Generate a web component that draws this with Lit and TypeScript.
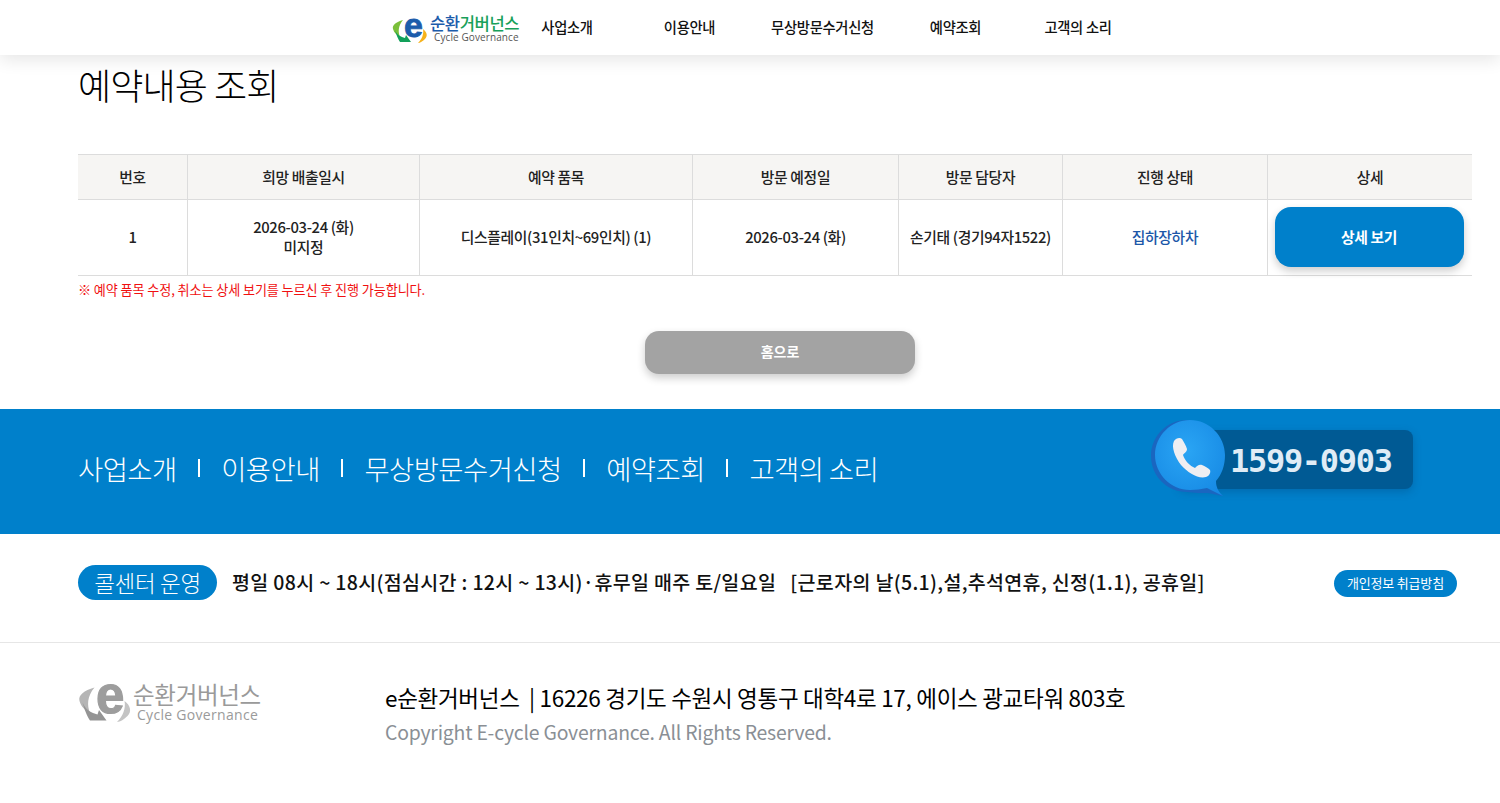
import { LitElement, html, css, svg } from "lit";
import { customElement } from "lit/decorators.js";

const logoMark = (grey: boolean) => {
  const g = grey ? "#b5b5b5" : "#7bbf3a";
  const o = grey ? "#c4c4c4" : "#f6b21b";
  const d = grey ? "#949494" : "#12a05a";
  const e = grey ? "#9d9d9d" : "#1c5cab";
  return svg`
    <path d="M11 3 C4 5 0 8 1 12 C2 16 5 18 8 20 C6 15 6 9 11 3Z" fill=${g}/>
    <path d="M3 13 C5 18 9 20 13 21 L14 18 L19 25 L8 25 C6 22 4 17 3 13Z" fill=${d}/>
    <path d="M31 12 C35 15 36 19 33 22 C31 24 28 26 26 26 C30 22 32 17 31 12Z" fill=${o}/>
    <text x="12" y="20" font-family="Liberation Sans, sans-serif" font-weight="700" font-size="34" stroke=${e} stroke-width=".8" fill=${e}>e</text>`;
};

@customElement("app-root")
export class AppRoot extends LitElement {
  static styles = css`
    :host { display: block; height: 803px; overflow: hidden; background: #fff; font-family: "Noto Sans CJK KR", "Noto Sans", sans-serif; color: #111; }
    * { box-sizing: border-box; }
    svg { overflow: visible; }
    header { position: relative; height: 55px; background: #fff; box-shadow: 0 4px 18px rgba(0,0,0,.11); display: flex; padding-left: 392px; align-items: center; }
    .logo-wrap { display: flex; gap: 2px; width: 129px; flex: none; margin-right: -20.5px; align-items: center; }
    .logo-mark { width: 36px; height: 26px; flex: none; margin-top: 4px; }
    .logo-text { display: flex; flex-direction: column; align-items: flex-start; padding-top: 1px; white-space: nowrap; }
    .logo-ko { font-size: 16.6px; line-height: 18px; font-weight: 500; letter-spacing: -.4px; color: #1c5cab; }
    .logo-ko b { font-weight: 500; color: #17a05a; }
    .logo-en { font-family: "Open Sans", sans-serif; font-size: 10px; line-height: 10px; color: #555; letter-spacing: .1px; margin-left: 4px; }
    nav { display: grid; grid-template-columns: 133px 112px 154px 112px 133px; text-align: center; font-size: 14.3px; line-height: 20px; font-weight: 500; letter-spacing: -.3px; color: #111; margin-top: -2px; }
    main { padding: 0 28px 0 78px; }
    h1 { margin: 0; padding-top: 4px; height: 99px; font-size: 36px; line-height: 50px; font-weight: 300; letter-spacing: -.9px; color: #000; }
    .table { display: grid; grid-template-columns: 109px 232px 273px 206px 164px 205px 205px; border-top: 1px solid #dcdcdc; font-size: 14.8px; font-weight: 500; line-height: 20px; letter-spacing: -.35px; text-align: center; color: #222; }
    .th, .td { display: flex; align-items: center; justify-content: center; flex-direction: column; border-bottom: 1px solid #dcdcdc; border-left: 1px solid #dcdcdc; }
    .first { border-left: 0; }
    .th { height: 45px; background: #f6f5f3; }
    .td { height: 76px; padding-bottom: 2px; }
    .status { color: #1c57a8; }
    .detail { width: 189px; height: 60px; margin-left: -2px; border-radius: 16px; background: #0080cb; color: #fff; font-weight: 700; box-shadow: 0 4px 8px rgba(0,0,0,.2); display: flex; align-items: center; justify-content: center; }
    .note { margin: 5px 0 0; font-size: 13.1px; line-height: 18px; letter-spacing: -.1px; color: #f01010; }
    .home-row { display: flex; justify-content: center; padding: 32px 0 0; height: 110px; margin-left: 10px; }
    .home { width: 270px; height: 43px; padding-bottom: 3px; border-radius: 14px; background: #a3a3a3; color: #fff; font-size: 14px; font-weight: 700; box-shadow: 0 4px 8px rgba(0,0,0,.2); display: flex; align-items: center; justify-content: center; }
    .band { height: 125px; background: #0080cb; display: flex; align-items: flex-start; padding: 0 87px 0 78px; justify-content: space-between; color: #fff; }
    .band-links { display: flex; align-items: center; gap: 21.3px; height: 118px; font-size: 27.4px; font-weight: 300; letter-spacing: -.55px; white-space: nowrap; }
    .sep { width: 2px; height: 18px; background: #fff; }
    .phone { position: relative; width: 235px; height: 59px; margin-top: 21px; padding-top: 3px; background: #005a94; border-radius: 8px; box-shadow: 0 3px 8px rgba(0,60,110,.3); display: flex; align-items: center; padding-left: 52px; }
    .phone span { font-family: "DejaVu Sans Mono", monospace; font-weight: 700; font-size: 32px; letter-spacing: -1.3px; color: #dfecf6; }
    .phone svg { position: absolute; left: -27px; top: -11px; width: 74px; height: 77px; }
    .hours { height: 109px; border-bottom: 1px solid #e6e6e6; display: flex; align-items: center; padding: 0 43px 11px 78px; }
    .pill { width: 139px; height: 35px; padding-bottom: 1px; border-radius: 17.5px; background: #0080cb; color: #fff; font-size: 22.5px; font-weight: 300; letter-spacing: -.3px; display: flex; align-items: center; justify-content: center; flex: none; }
    .hours-text { flex: 1; margin: 0 0 3px 15px; font-size: 19.5px; font-weight: 500; letter-spacing: .33px; white-space: pre; color: #111; }
    .privacy { width: 123px; height: 27px; padding-bottom: 1px; border-radius: 13.5px; background: #0080cb; color: #fff; font-size: 13px; letter-spacing: -.2px; display: flex; align-items: center; justify-content: center; margin-top: 1px; flex: none; }
    .foot { display: flex; padding: 37px 0 0 78px; }
    .foot-logo { width: 307px; display: flex; gap: 1px; flex: none; color: #9a9a9a; }
    .foot-logo svg { width: 54px; height: 39px; flex: none; margin-top: 3px; }
    .foot-logo .ko { font-size: 23.5px; line-height: 28px; font-weight: 400; letter-spacing: -.3px; white-space: nowrap; }
    .foot-logo .en { font-family: "Open Sans", sans-serif; font-size: 14px; line-height: 14px; letter-spacing: .3px; margin-left: 4px; white-space: nowrap; }
    .addr { font-size: 22.5px; line-height: 38px; letter-spacing: -.3px; color: #000; margin-top: -2px; white-space: nowrap; }
    .copy { font-size: 19.4px; line-height: 32px; letter-spacing: -.2px; color: #8a8f95; white-space: nowrap; }
  `;

  render() {
    const heads = ["번호", "희망 배출일시", "예약 품목", "방문 예정일", "방문 담당자", "진행 상태", "상세"];
    return html`
      <header>
        <div class="logo-wrap">
          <svg class="logo-mark" viewBox="0 0 36 26">${logoMark(false)}</svg>
          <div class="logo-text">
            <span class="logo-ko">순환<b>거버넌스</b></span>
            <span class="logo-en">Cycle Governance</span>
          </div>
        </div>
        <nav>
          <span>사업소개</span><span>이용안내</span><span>무상방문수거신청</span><span>예약조회</span><span>고객의 소리</span>
        </nav>
      </header>
      <main>
        <h1>예약내용 조회</h1>
        <div class="table">
          ${heads.map((h, i) => html`<div class="th ${i === 0 ? "first" : ""}">${h}</div>`)}
          <div class="td first">1</div>
          <div class="td"><span>2026-03-24 (화)</span><span>미지정</span></div>
          <div class="td">디스플레이(31인치~69인치) (1)</div>
          <div class="td">2026-03-24 (화)</div>
          <div class="td">손기태 (경기94자1522)</div>
          <div class="td status">집하장하차</div>
          <div class="td"><div class="detail">상세 보기</div></div>
        </div>
        <p class="note">※ 예약 품목 수정, 취소는 상세 보기를 누르신 후 진행 가능합니다.</p>
        <div class="home-row"><div class="home">홈으로</div></div>
      </main>
      <section class="band">
        <div class="band-links">
          <span>사업소개</span><i class="sep"></i><span>이용안내</span><i class="sep"></i><span>무상방문수거신청</span><i class="sep"></i><span>예약조회</span><i class="sep"></i><span>고객의 소리</span>
        </div>
        <div class="phone">
          <svg viewBox="0 0 74 77">
            <defs>
              <radialGradient id="bub" cx=".45" cy=".4" r=".7"><stop offset="0" stop-color="#2aa5f4"/><stop offset="1" stop-color="#1689e4"/></radialGradient>
            </defs>
            <path d="M36 1 C16 1 0 17 0 37 C0 57 16 73 36 73 C44 74 50 74 57 74 L72 77 C66 72 64 67 65 62 L60 20 C54 8 46 1 36 1Z" fill="#1a66c0"/>
            <path d="M39 1 C20 1 4 17 4 36 C4 55 20 71 39 71 C45 71 50 70 56 69 L72 77 C67 72 65 68 65 62 C71 55 74 46 74 36 C74 17 58 1 39 1Z" fill="url(#bub)"/>
            <path d="M23 22 C25 19 29 18 31 20 C33 23 35 27 36 30 C36 33 33 34 32 36 C34 42 39 47 44 49 C46 47 48 45 51 46 C54 47 57 49 59 51 C60 54 58 57 55 58 C47 60 37 54 30 46 C24 38 20 28 23 22Z" fill="#eeeef2"/>
          </svg>
          <span>1599-0903</span>
        </div>
      </section>
      <section class="hours">
        <div class="pill">콜센터 운영</div>
        <div class="hours-text">평일 08시 ~ 18시(점심시간 : 12시 ~ 13시)·휴무일 매주 토/일요일   [근로자의 날(5.1),설,추석연휴, 신정(1.1), 공휴일]</div>
        <div class="privacy">개인정보 취급방침</div>
      </section>
      <footer class="foot">
        <div class="foot-logo">
          <svg viewBox="0 0 36 26">${logoMark(true)}</svg>
          <div>
            <div class="ko">순환거버넌스</div>
            <div class="en">Cycle Governance</div>
          </div>
        </div>
        <div>
          <div class="addr">e순환거버넌스 &nbsp;| 16226 경기도 수원시 영통구 대학4로 17, 에이스 광교타워 803호</div>
          <div class="copy">Copyright E-cycle Governance. All Rights Reserved.</div>
        </div>
      </footer>
    `;
  }
}
